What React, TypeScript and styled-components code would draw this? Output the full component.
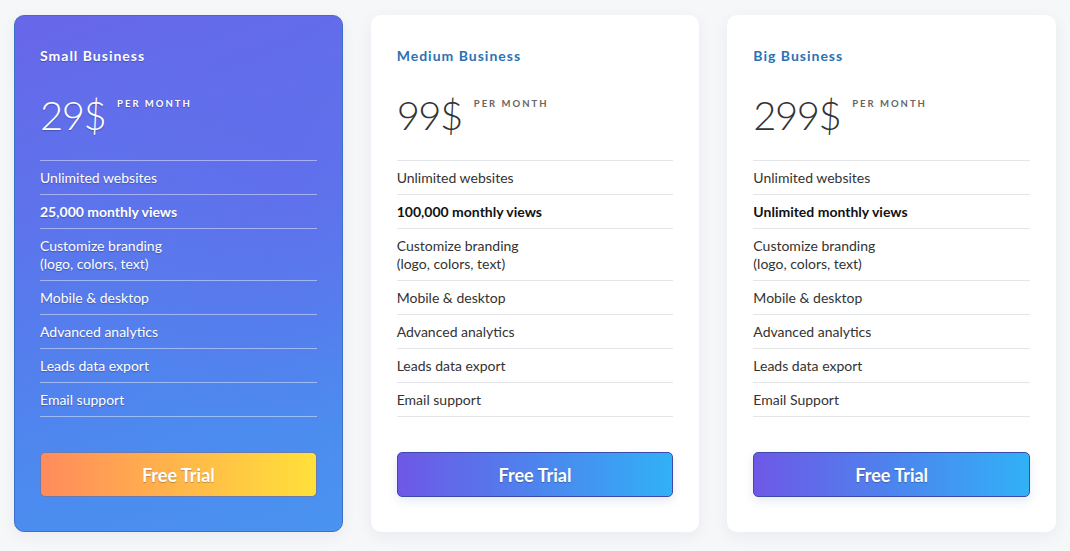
import React from "react";
import styled, { createGlobalStyle, css } from "styled-components";

const GlobalStyle = createGlobalStyle`
  html, body {
    margin: 0;
    padding: 0;
    background: #f6f7f9;
    font-family: Lato, "Noto Sans", sans-serif;
  }
`;

const Page = styled.div`
  display: flex;
  gap: 28px;
  padding: 15px 14px 20px 14px;
  align-items: flex-start;
`;

const Card = styled.div<{ $featured?: boolean }>`
  width: 329px;
  box-sizing: border-box;
  height: 517px;
  padding: 32px 26px 35px 26px;
  border-radius: 10px;
  display: flex;
  flex-direction: column;
  background: #fff;
  color: #333;
  box-shadow: 0 4px 16px rgba(30, 40, 70, 0.06);
  ${({ $featured }) =>
    $featured &&
    css`
      color: #fff;
      border: 1px solid #3c6fc8;
      padding: 31px 25px 34px 25px;
      background:
        radial-gradient(ellipse 90% 75% at 85% 30%, rgba(102, 104, 234, 0.55) 0%, rgba(102, 104, 234, 0) 70%),
        linear-gradient(160deg, #6867e9 0%, #5c74ec 35%, #4c8aef 75%, #4a93f0 100%);
      text-shadow: 0 1px 1px rgba(20, 30, 90, 0.35);
    `}
`;

const Title = styled.div<{ $featured?: boolean }>`
  font-size: 14px;
  font-weight: 700;
  letter-spacing: 1px;
  line-height: 18px;
  color: ${({ $featured }) => ($featured ? "#fff" : "#2a72b5")};
`;

const PriceRow = styled.div`
  display: flex;
  align-items: flex-start;
  gap: 12px;
  margin-top: 28px;
  height: 56px;
`;

const Amount = styled.div`
  font-size: 40px;
  font-weight: 300;
  line-height: 44px;
  letter-spacing: -1.5px;
`;

const Per = styled.div<{ $featured?: boolean }>`
  font-size: 9.5px;
  font-weight: 700;
  letter-spacing: 2px;
  margin-top: 5px;
  color: ${({ $featured }) => ($featured ? "#fff" : "#666")};
`;

const Features = styled.ul<{ $featured?: boolean }>`
  list-style: none;
  margin: 12px 0 0 0;
  padding: 0;
  border-top: 1px solid ${({ $featured }) => ($featured ? "rgba(255,255,255,0.45)" : "#e3e5e8")};
`;

const Feature = styled.li<{ $featured?: boolean; $bold?: boolean }>`
  font-size: 14px;
  line-height: 18px;
  padding: 8px 0 7px 0;
  font-weight: ${({ $bold }) => ($bold ? 700 : 400)};
  color: ${({ $featured, $bold }) => ($featured ? "#fff" : $bold ? "#111" : "#333")};
  border-bottom: 1px solid ${({ $featured }) => ($featured ? "rgba(255,255,255,0.45)" : "#e3e5e8")};
`;

const TrialButton = styled.button<{ $warm?: boolean }>`
  margin-top: 35px;
  height: 45px;
  width: 100%;
  border-radius: 5px;
  font-family: Lato, "Noto Sans", sans-serif;
  font-size: 18px;
  font-weight: 700;
  color: #fff;
  cursor: pointer;
  text-shadow: 0 1px 1px rgba(0, 0, 0, 0.25);
  ${({ $warm }) =>
    $warm
      ? css`
          background: linear-gradient(90deg, #ff8b5c 0%, #ffb64a 50%, #ffe13a 100%);
          border: 1px solid #6a7bb0;
        `
      : css`
          background: linear-gradient(90deg, #6e58e6 0%, #4d84ee 50%, #31b1f6 100%);
          border: 1px solid #3e4aa8;
          box-shadow: 0 4px 10px rgba(60, 80, 160, 0.12);
        `}
`;

type Plan = {
  name: string;
  price: string;
  views: string;
  email: string;
  featured?: boolean;
};

const plans: Plan[] = [
  { name: "Small Business", price: "29$", views: "25,000 monthly views", email: "Email support", featured: true },
  { name: "Medium Business", price: "99$", views: "100,000 monthly views", email: "Email support" },
  { name: "Big Business", price: "299$", views: "Unlimited monthly views", email: "Email Support" },
];

export default function App() {
  return (
    <>
      <GlobalStyle />
      <Page>
        {plans.map((p) => (
          <Card key={p.name} $featured={p.featured}>
            <Title $featured={p.featured}>{p.name}</Title>
            <PriceRow>
              <Amount>{p.price}</Amount>
              <Per $featured={p.featured}>PER MONTH</Per>
            </PriceRow>
            <Features $featured={p.featured}>
              <Feature $featured={p.featured}>Unlimited websites</Feature>
              <Feature $featured={p.featured} $bold>
                {p.views}
              </Feature>
              <Feature $featured={p.featured}>
                Customize branding
                <br />
                (logo, colors, text)
              </Feature>
              <Feature $featured={p.featured}>Mobile &amp; desktop</Feature>
              <Feature $featured={p.featured}>Advanced analytics</Feature>
              <Feature $featured={p.featured}>Leads data export</Feature>
              <Feature $featured={p.featured}>{p.email}</Feature>
            </Features>
            <TrialButton $warm={p.featured}>Free Trial</TrialButton>
          </Card>
        ))}
      </Page>
    </>
  );
}
